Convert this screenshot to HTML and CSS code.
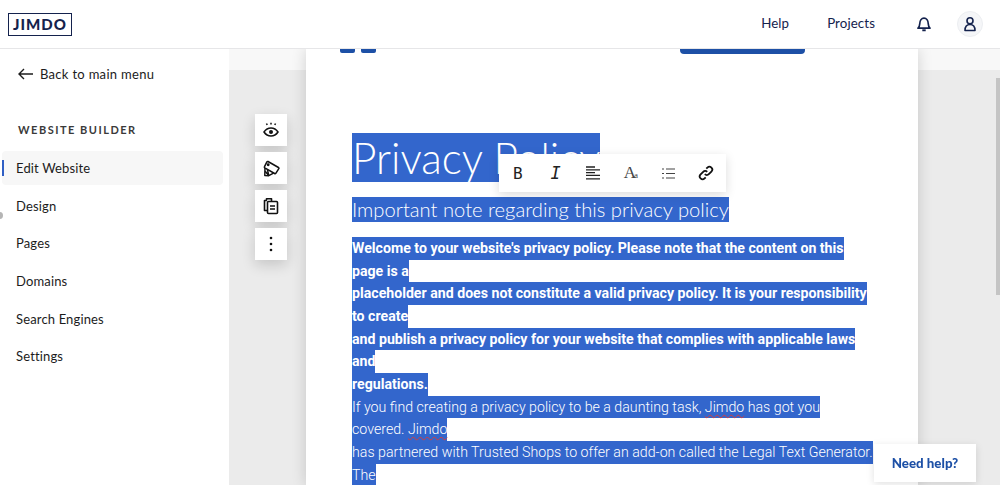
FILE: index.html
```html
<!DOCTYPE html>
<html lang="en">
<head>
    <meta charset="UTF-8">
    <title>Jimdo Website Builder</title>
    <link rel="stylesheet" href="styles.css">
</head>
<body>
    <header class="topbar">
        <div class="logo">JIMDO</div>
        <nav class="top-nav">
            <a class="top-link">Help</a>
            <a class="top-link">Projects</a>
            <svg class="bell" width="16" height="16" viewBox="0 0 16 16" fill="none" stroke="#14224d" stroke-width="1.700" stroke-linejoin="round">
                <path d="M2 12.200c1.200-1 1.600-2 1.700-4.200C3.800 4.600 5.600 2.200 8 2.200s4.200 2.400 4.300 5.800c.1 2.200.5 3.200 1.700 4.200z"/>
                <path d="M6.300 14.300h3.400" stroke-width="1.900"/>
            </svg>
            <div class="avatar">
                <svg width="16" height="16" viewBox="0 0 16 16" fill="none" stroke="#14224d" stroke-width="1.600">
                    <circle cx="8" cy="4.800" r="3"/>
                    <path d="M3 14.500c0-3.500 1.800-6 5-6s5 2.500 5 6z" stroke-linejoin="round"/>
                </svg>
            </div>
        </nav>
    </header>

    <div class="workspace">
        <aside class="sidebar">
            <a class="back-link">
                <svg width="15" height="12" viewBox="0 0 15 12" fill="none" stroke="#1c1c1c" stroke-width="1.400">
                    <path d="M15 6H1M6 1 1 6l5 5"/>
                </svg>
                Back to main menu
            </a>
            <h3 class="side-title">WEBSITE BUILDER</h3>
            <ul class="side-menu">
                <li class="side-item active">Edit Website</li>
                <li class="side-item">Design</li>
                <li class="side-item">Pages</li>
                <li class="side-item">Domains</li>
                <li class="side-item">Search Engines</li>
                <li class="side-item">Settings</li>
            </ul>
            <span class="side-dot"></span>
        </aside>

        <main class="canvas">
            <div class="page-strip"></div>
            <div class="tools">
                <button class="tool-btn">
                    <svg width="16" height="16" viewBox="0 0 16 16" fill="none" stroke="#111" stroke-width="1.500">
                        <path d="M1 10c1.800-2.700 4.100-4 7-4s5.200 1.300 7 4c-1.800 2.700-4.100 4-7 4s-5.200-1.300-7-4z"/>
                        <circle cx="8" cy="10" r="2" fill="#111" stroke="none"/>
                        <path d="M8 .8v1.800M3.500 1.500l.7 1.500M12.500 1.500l-.7 1.500"/>
                    </svg>
                </button>
                <button class="tool-btn">
                    <svg width="17" height="17" viewBox="0 0 17 17" fill="none" stroke="#111" stroke-width="1.500" stroke-linejoin="round">
                        <path d="M5 1.500 15.500 7.500q.7.500.3 1.200l-3 4.600q-.5.600-1.200.2L1.800 7.800q-.6-.4-.3-1.100l2.400-4.800q.4-.7 1.100-.4z"/>
                        <path d="M2 8 1.800 15.500 5.800 15.700 10.500 13.200"/>
                        <path d="M2.200 11.200 5.800 15.700M4.500 9.800 5.800 15.700"/>
                        <circle cx="5.200" cy="4.800" r=".7" fill="#111"/>
                    </svg>
                </button>
                <button class="tool-btn">
                    <svg width="16" height="18" viewBox="0 0 16 18" fill="none" stroke="#111" stroke-width="1.600" stroke-linejoin="round">
                        <path d="M4.500 13.500h-3V3.500h2.500M3.500 3.500V1.800h5v2.500"/>
                        <rect x="4.500" y="4.500" width="10" height="12" rx="1"/>
                        <path d="M7 9h5M7 12h5"/>
                    </svg>
                </button>
                <button class="tool-btn">
                    <svg width="4" height="16" viewBox="0 0 4 16" fill="#111">
                        <circle cx="2" cy="2" r="1.300"/>
                        <circle cx="2" cy="8" r="1.300"/>
                        <circle cx="2" cy="14" r="1.300"/>
                    </svg>
                </button>
            </div>

            <article class="page">
                <div class="page-top">
                    <div class="top-blocks">
                        <span class="blue-tab small"></span>
                        <span class="blue-tab small"></span>
                    </div>
                    <span class="blue-tab wide"></span>
                </div>

                <div class="doc">
                    <h1 class="doc-title"><span class="sel">Privacy Policy</span></h1>
                    <h2 class="doc-sub"><span class="sel">Important note regarding this privacy policy</span></h2>
                    <div class="doc-body">
                        <div class="bold"><span class="sel">Welcome to your website's privacy policy. Please note that the content on this</span></div>
                        <div class="bold"><span class="sel">page is a</span></div>
                        <div class="bold"><span class="sel">placeholder and does not constitute a valid privacy policy. It is your responsibility</span></div>
                        <div class="bold"><span class="sel">to create</span></div>
                        <div class="bold"><span class="sel">and publish a privacy policy for your website that complies with applicable laws</span></div>
                        <div class="bold"><span class="sel">and</span></div>
                        <div class="bold"><span class="sel">regulations.</span></div>
                        <div class="light"><span class="sel">If you find creating a privacy policy to be a daunting task, <u class="typo">Jimdo</u> has got you</span></div>
                        <div class="light"><span class="sel">covered. <u class="typo">Jimdo</u></span></div>
                        <div class="light"><span class="sel">has partnered with Trusted Shops to offer an add-on called the Legal Text Generator.</span></div>
                        <div class="light"><span class="sel">The</span></div>
                    </div>

                    <div class="format-bar">
                        <span class="fmt fmt-b">B</span>
                        <span class="fmt fmt-i">I</span>
                        <svg width="14" height="14" viewBox="0 0 14 14" stroke="#222" stroke-width="1.300">
                            <path d="M0 1h9M0 3.800h14M0 6.600h9M0 9.400h14M0 12.800h14"/>
                        </svg>
                        <span class="fmt fmt-a">A<small>a</small></span>
                        <svg width="13" height="11" viewBox="0 0 13 11" stroke="#444" stroke-width="1.200">
                            <path d="M4 1h9M4 5.500h9M4 10h9M0 1h2M0 5.500h2M0 10h2"/>
                        </svg>
                        <svg width="16" height="16" viewBox="0 0 16 16" fill="none" stroke="#111" stroke-width="1.800">
                            <path d="M6.800 9.200a2.800 2.800 0 0 0 4 0l2.600-2.600a2.800 2.800 0 0 0-4-4L8.300 3.700"/>
                            <path d="M9.200 6.800a2.800 2.800 0 0 0-4 0L2.600 9.400a2.800 2.800 0 0 0 4 4l1.100-1.100"/>
                        </svg>
                    </div>
                </div>
            </article>
        </main>
    </div>

    <a class="need-help">Need help?</a>
    <div class="scroll-thumb"></div>
</body>
</html>
```

FILE: styles.css
```css
* {
    margin: 0;
    padding: 0;
    box-sizing: border-box;
}

html, body {
    height: 100%;
    overflow: hidden;
}

body {
    font-family: 'Lato', sans-serif;
    background: #ebebeb;
    display: flex;
    flex-direction: column;
    color: #1c1c1c;
}

.topbar {
    height: 49px;
    flex-shrink: 0;
    background: #fff;
    border-bottom: 1px solid #e6e6e8;
    display: flex;
    align-items: center;
    justify-content: space-between;
    padding: 0 17px 0 8px;
    position: relative;
    z-index: 2;
}

.logo {
    width: 64px;
    height: 23px;
    border: 1.500px solid #14224d;
    color: #14224d;
    font-size: 15px;
    font-weight: 900;
    letter-spacing: 1px;
    line-height: 20px;
    text-align: center;
}

.top-nav {
    display: flex;
    align-items: center;
}

.top-link {
    font-size: 13.300px;
    color: #14224d;
    margin-right: 38px;
    padding-bottom: 2px;
    letter-spacing: 0.1px;
}

.top-link + .top-link {
    margin-right: 41px;
}

.bell {
    margin-right: 25px;
}

.avatar {
    width: 26px;
    height: 26px;
    border-radius: 50%;
    background: #f5f6f8;
    border: 1px solid #eceef1;
    display: flex;
    align-items: center;
    justify-content: center;
}

.workspace {
    flex: 1;
    display: flex;
    min-height: 0;
}

.sidebar {
    width: 229px;
    flex-shrink: 0;
    background: #fff;
    padding: 18px 6px 0 2px;
    position: relative;
}

.back-link {
    display: flex;
    align-items: center;
    gap: 7px;
    padding-left: 16px;
    font-size: 13px;
    height: 14px;
    letter-spacing: 0.3px;
}

.side-title {
    font-size: 11px;
    font-weight: 700;
    letter-spacing: 1.500px;
    color: #3a3a3a;
    padding-left: 16px;
    margin-top: 42px;
    line-height: 14px;
}

.side-menu {
    list-style: none;
    margin-top: 14px;
}

.side-item {
    height: 34px;
    line-height: 34px;
    padding-left: 14px;
    font-size: 13px;
    letter-spacing: 0.15px;
    margin-bottom: 3.700px;
    position: relative;
}

.side-item.active {
    background: #f7f7f7;
    border-radius: 4px;
}

.side-item.active::before {
    content: '';
    position: absolute;
    left: 0;
    top: 9px;
    width: 2px;
    height: 16px;
    background: #2f5fc4;
}

.side-dot {
    position: absolute;
    left: -4px;
    top: 163px;
    width: 7px;
    height: 7px;
    border-radius: 50%;
    background: #b5b5b5;
}

.canvas {
    flex: 1;
    position: relative;
    display: flex;
    padding-left: 77px;
    padding-right: 82px;
    min-width: 0;
}

.page-strip {
    position: absolute;
    left: 0;
    right: 0;
    top: 0;
    height: 21px;
    background: #f8f8f8;
}

.tools {
    position: absolute;
    left: 26px;
    top: 65px;
    display: flex;
    flex-direction: column;
    gap: 6px;
}

.tool-btn {
    width: 32px;
    height: 32px;
    background: #fff;
    border: none;
    display: flex;
    align-items: center;
    justify-content: center;
    box-shadow: 0 5px 14px rgba(0, 0, 0, 0.16);
}

.page {
    flex: 1;
    background: #fff;
    box-shadow: 0 0 14px rgba(0, 0, 0, 0.16);
    position: relative;
    padding-left: 46px;
    overflow: hidden;
}

.page-top {
    display: flex;
    justify-content: space-between;
    align-items: flex-start;
    margin-left: -12px;
    padding-right: 113px;
    height: 84px;
}

.top-blocks {
    display: flex;
    gap: 6px;
}

.blue-tab {
    display: block;
    background: #1d50a6;
    height: 4px;
    border-radius: 0 0 2px 2px;
}

.blue-tab.small {
    width: 15px;
}

.blue-tab.wide {
    width: 125px;
    height: 5px;
    border-radius: 0 0 4px 4px;
}

.doc {
    position: relative;
}

.sel {
    background: #3366cc;
    color: #fff;
    display: inline-block;
}

.doc-title {
    font-size: 42.400px;
    font-weight: 300;
    line-height: 49px;
}

.doc-sub {
    font-size: 20.200px;
    font-weight: 300;
    line-height: 25px;
    margin-top: 15px;
}

.doc-body {
    font-family: 'Roboto', sans-serif;
    font-size: 14.150px;
    line-height: 22.670px;
    margin-top: 15px;
}

.bold {
    font-weight: 700;
}

.light {
    font-weight: 300;
    font-size: 14.200px;
}

.typo {
    text-decoration: underline wavy #d43c3c 1px;
    text-underline-offset: 2px;
}

.format-bar {
    position: absolute;
    left: 147px;
    top: 21px;
    width: 227px;
    height: 38px;
    background: #fff;
    box-shadow: 0 3px 10px rgba(0, 0, 0, 0.14);
    display: grid;
    grid-template-columns: repeat(6, 37.700px);
    align-items: center;
    justify-items: center;
}

.fmt {
    text-align: center;
    color: #222;
    font-family: 'Liberation Serif', serif;
}

.fmt-b {
    font-family: 'DejaVu Sans Mono', monospace;
    font-size: 16px;
}

.fmt-i {
    font-family: 'DejaVu Sans Mono', monospace;
    font-size: 17px;
    font-style: italic;
}

.fmt-a {
    font-size: 17px;
    color: #444;
}

.fmt-a small {
    font-size: 9px;
    margin-left: -2px;
}

.need-help {
    position: fixed;
    right: 24px;
    bottom: 3px;
    width: 102px;
    height: 38px;
    background: #fff;
    color: #1d50a6;
    font-size: 13.300px;
    font-weight: 900;
    text-align: center;
    line-height: 38px;
    box-shadow: 0 2px 8px rgba(0, 0, 0, 0.12);
}

.scroll-thumb {
    position: fixed;
    right: 0;
    top: 78px;
    width: 4px;
    height: 217px;
    background: #c4c4c4;
}
```
